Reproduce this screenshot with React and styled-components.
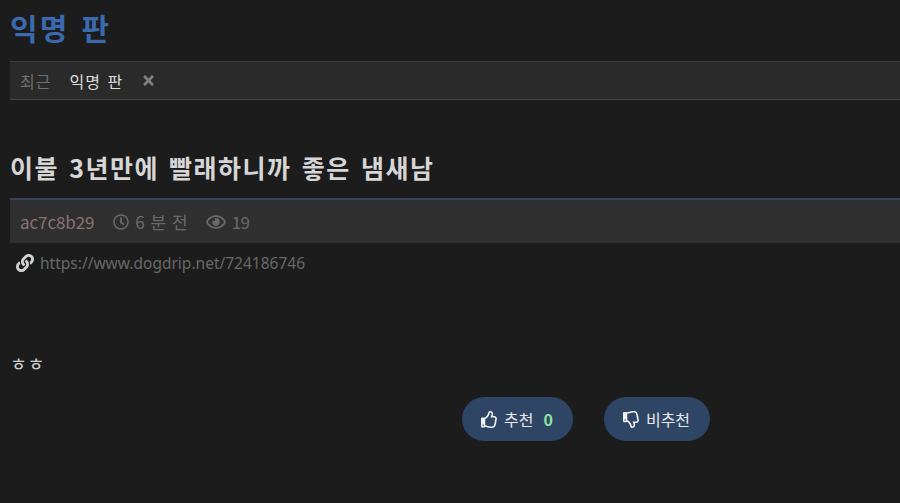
import styled, { createGlobalStyle } from "styled-components";
import { FaLink, FaRegClock, FaRegEye, FaRegThumbsDown, FaRegThumbsUp, FaTimes } from "react-icons/fa";

const GlobalStyle = createGlobalStyle`
  html, body {
    margin: 0;
    height: 100%;
    overflow: hidden;
    background: #1c1c1c;
    font-family: "Noto Sans CJK KR", "Noto Sans", sans-serif;
  }
`;

const Page = styled.div`
  width: 900px;
  height: 503px;
  padding-left: 10px;
  box-sizing: border-box;
  overflow: hidden;
`;

const BoardTitle = styled.h1`
  margin: 0;
  height: 61px;
  font-size: 30px;
  line-height: 55px;
  font-weight: 700;
  color: #3a69ad;
  letter-spacing: 2.2px;
  word-spacing: 3px;
`;

const RecentBar = styled.div`
  height: 39px;
  display: flex;
  align-items: center;
  padding-left: 10px;
  box-sizing: border-box;
  background: #2a2a2a;
  border-top: 1px solid #3a3a3a;
  border-bottom: 1px solid #444;
  font-size: 16px;
`;

const RecentLabel = styled.span`
  color: #6f6f6f;
  margin-right: 18px;
  letter-spacing: 1px;
`;

const RecentLink = styled.span`
  color: #dcdcdc;
  margin-right: 18px;
  letter-spacing: 1px;
  word-spacing: 2px;
`;

const CloseIcon = styled(FaTimes)`
  color: #808080;
  font-size: 15px;
`;

const PostTitle = styled.h2`
  margin: 53px 0 0;
  height: 45px;
  font-size: 25px;
  line-height: 28px;
  font-weight: 700;
  color: #d6d6d6;
  letter-spacing: 1.5px;
  word-spacing: 3px;
`;

const MetaBar = styled.div`
  height: 45px;
  display: flex;
  align-items: center;
  padding-left: 10px;
  box-sizing: border-box;
  background: #2f2f2f;
  border-top: 2px solid #34425a;
  color: #6a6a6a;
  font-size: 17px;
`;

const Author = styled.span`
  color: #8a7274;
  margin-right: 19px;
  letter-spacing: -0.1px;
`;

const MetaItem = styled.span`
  display: flex;
  align-items: center;
  gap: 6px;
  margin-right: 17px;
  letter-spacing: ${(props) => (props.$wide ? "1px" : "-0.6px")};
  svg {
    font-size: ${(props) => (props.$wide ? "16px" : "20px")};
  }
`;

const UrlRow = styled.div`
  height: 40px;
  display: flex;
  align-items: center;
  gap: 6px;
  padding: 0 0 0 6px;
  box-sizing: border-box;
  color: #686868;
  font-size: 15.5px;
  font-family: "Noto Sans", sans-serif;
  svg {
    color: #d2d2d2;
    font-size: 18px;
  }
`;

const Body = styled.div`
  margin-top: 69px;
  height: 45px;
  font-size: 18.5px;
  line-height: 22px;
  letter-spacing: 0.5px;
  color: #d2d2d2;
`;

const Votes = styled.div`
  display: flex;
  gap: 31px;
  padding-left: 452px;
`;

const VoteButton = styled.div`
  height: 44px;
  display: flex;
  align-items: center;
  gap: 6px;
  padding: 0 20px 0 19px;
  box-sizing: border-box;
  border-radius: 22px;
  background: #2e4565;
  color: #e8e8e8;
  font-size: 16px;
  svg {
    color: #f2f2f2;
    font-size: 17px;
  }
`;

const Count = styled.b`
  margin-left: 4px;
  font-size: 16px;
  color: #8fe3a0;
`;

export default function App() {
  return (
    <Page>
      <GlobalStyle />
      <BoardTitle>익명 판</BoardTitle>
      <RecentBar>
        <RecentLabel>최근</RecentLabel>
        <RecentLink>익명 판</RecentLink>
        <CloseIcon />
      </RecentBar>
      <PostTitle>이불 3년만에 빨래하니까 좋은 냄새남</PostTitle>
      <MetaBar>
        <Author>ac7c8b29</Author>
        <MetaItem $wide>
          <FaRegClock />6 분 전
        </MetaItem>
        <MetaItem>
          <FaRegEye />19
        </MetaItem>
      </MetaBar>
      <UrlRow>
        <FaLink />
        https://www.dogdrip.net/724186746
      </UrlRow>
      <Body>ㅎㅎ</Body>
      <Votes>
        <VoteButton>
          <FaRegThumbsUp />
          추천
          <Count>0</Count>
        </VoteButton>
        <VoteButton>
          <FaRegThumbsDown />
          비추천
        </VoteButton>
      </Votes>
    </Page>
  );
}
